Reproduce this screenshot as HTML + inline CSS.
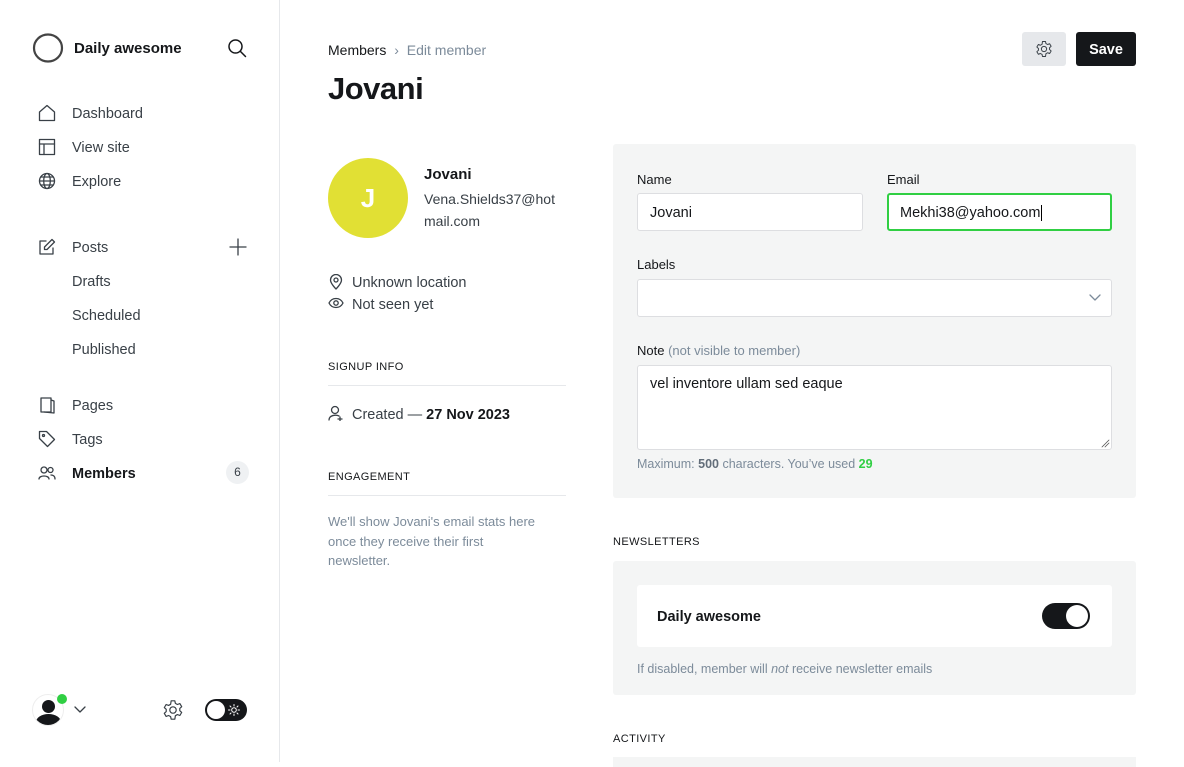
<!DOCTYPE html>
<html><head><meta charset="utf-8"><style>
*{box-sizing:border-box;margin:0;padding:0}
body{width:1184px;height:762px;overflow:hidden;background:#fff;font-family:"Liberation Sans",sans-serif;color:#15171a;position:relative}
.a{position:absolute}
.nav{font-size:14.5px;color:#394047;left:72px}
.ic{position:absolute;left:38px}
svg{fill:none;stroke:#394047;stroke-width:1.3;stroke-linecap:round;stroke-linejoin:round}
.lbl{font-size:13px;color:#15171a}
.inp{position:absolute;background:#fff;border:1px solid #dddee1;border-radius:3px;font-size:14.5px;padding-left:12px;color:#15171a}
.cap{font-size:11px;letter-spacing:.4px;color:#15171a}
.gray{color:#7c8b9a}
</style></head><body>
<div class="a" style="left:279px;top:0;width:1px;height:762px;background:#e6e8eb"></div>
<svg class="a" style="left:32px;top:33px" width="32" height="30" viewBox="0 0 32 30"><ellipse cx="16" cy="15" rx="14" ry="13.5" stroke="#444" stroke-width="2.2"/></svg>
<div class="a" style="left:74px;top:40px;font-size:15px;font-weight:bold">Daily awesome</div>
<svg class="a" style="left:227px;top:38px" width="20" height="20"><circle cx="8.5" cy="8.5" r="6.5" stroke="#15171a" stroke-width="1.5"/><path d="M13.5 13.5L18.5 18.5" stroke="#15171a" stroke-width="1.5"/></svg>

<svg class="ic" style="top:104px" width="18" height="18"><path d="M1.5 8L9 1.5L16.5 8V16.5H1.5Z"/></svg>
<div class="a nav" style="top:106px">Dashboard</div>
<svg class="ic" style="top:138px" width="18" height="18"><rect x="1.5" y="1.5" width="15" height="15"/><path d="M1.5 6H16.5M6 6V16.5"/></svg>
<div class="a nav" style="top:140px">View site</div>
<svg class="ic" style="top:172px" width="18" height="18"><circle cx="9" cy="9" r="7.5"/><ellipse cx="9" cy="9" rx="3.3" ry="7.5"/><path d="M1.5 9H16.5M3 5H15M3 13H15"/></svg>
<div class="a nav" style="top:174px">Explore</div>

<svg class="ic" style="top:238px" width="18" height="18"><path d="M8 3H2V16H15V10"/><path d="M14 1.5L16.5 4L9 11.5H6.5V9Z"/></svg>
<div class="a nav" style="top:240px">Posts</div>
<svg class="a" style="left:229px;top:238px" width="18" height="18"><path d="M9 1V17M1 9H17"/></svg>
<div class="a nav" style="top:274px">Drafts</div>
<div class="a nav" style="top:308px">Scheduled</div>
<div class="a nav" style="top:342px">Published</div>

<svg class="ic" style="top:396px" width="18" height="18"><path d="M3 2H13V16H3Z"/><path d="M13 4L16 5V17L6 16"/></svg>
<div class="a nav" style="top:398px">Pages</div>
<svg class="ic" style="top:430px" width="18" height="18"><path d="M1.5 1.5H8.5L16.5 9.5L9.5 16.5L1.5 8.5Z"/><circle cx="5.5" cy="5.5" r="1"/></svg>
<div class="a nav" style="top:432px">Tags</div>
<svg class="ic" style="top:465px" width="18" height="16"><circle cx="6" cy="5" r="3"/><path d="M1 14C1 10 11 10 11 14"/><circle cx="12.5" cy="5" r="2.5"/><path d="M13 10C15 10 17 11 17 14"/></svg>
<div class="a nav" style="top:466px;font-weight:bold;color:#15171a">Members</div>
<div class="a" style="left:226px;top:461px;width:23px;height:23px;border-radius:12px;background:#eff1f3;font-size:12px;text-align:center;line-height:23px;color:#394047">6</div>

<div class="a" style="left:32px;top:694px;width:32px;height:32px;border-radius:50%;border:1px solid #eee;overflow:hidden;background:#fff">
<div class="a" style="left:9px;top:5px;width:13px;height:13px;border-radius:50%;background:#15171a"></div>
<div class="a" style="left:3px;top:19px;width:25px;height:16px;border-radius:50% 50% 0 0;background:#15171a"></div></div>
<div class="a" style="left:57px;top:694px;width:10px;height:10px;border-radius:50%;background:#30cf43"></div>
<svg class="a" style="left:74px;top:706px" width="12" height="8"><path d="M1 1L6 6L11 1"/></svg>
<svg class="a" style="left:162px;top:699px" width="22" height="22" viewBox="0 0 24 24"><circle cx="12" cy="12" r="3.5"/><path d="M10 2h4l.6 2.8 2.2 1.2 2.7-1 2 3.4-2.1 1.9v2.4l2.1 1.9-2 3.4-2.7-1-2.2 1.2L14 22h-4l-.6-2.8-2.2-1.2-2.7 1-2-3.4 2.1-1.9V11.3L2.5 9.4l2-3.4 2.7 1 2.2-1.2Z"/></svg>
<div class="a" style="left:205px;top:699px;width:42px;height:22px;border-radius:11px;background:#15171a"></div>
<div class="a" style="left:207px;top:701px;width:18px;height:18px;border-radius:50%;background:#fff"></div>
<svg class="a" style="left:228px;top:704px" width="12" height="12"><circle cx="6" cy="6" r="2.3" stroke="#fff" stroke-width="1"/><path d="M6 0.5V2M6 10V11.5M0.5 6H2M10 6H11.5M2 2L3 3M9 9L10 10M2 10L3 9M9 3L10 2" stroke="#fff" stroke-width="1"/></svg>

<div class="a" style="left:328px;top:42px;font-size:14px;color:#15171a">Members <span style="color:#7c8b9a;margin:0 4px">›</span> <span style="color:#7c8b9a">Edit member</span></div>
<div class="a" style="left:328px;top:71px;font-size:31px;font-weight:bold;letter-spacing:-.5px">Jovani</div>
<div class="a" style="left:1022px;top:32px;width:44px;height:34px;border-radius:3px;background:#e6e8eb"></div>
<svg class="a" style="left:1035px;top:40px" width="18" height="18" viewBox="0 0 24 24"><circle cx="12" cy="12" r="3.5"/><path d="M10 2h4l.6 2.8 2.2 1.2 2.7-1 2 3.4-2.1 1.9v2.4l2.1 1.9-2 3.4-2.7-1-2.2 1.2L14 22h-4l-.6-2.8-2.2-1.2-2.7 1-2-3.4 2.1-1.9V11.3L2.5 9.4l2-3.4 2.7 1 2.2-1.2Z"/></svg>
<div class="a" style="left:1076px;top:32px;width:60px;height:34px;border-radius:3px;background:#15171a;color:#fff;font-weight:bold;font-size:14.5px;text-align:center;line-height:36px">Save</div>

<div class="a" style="left:328px;top:158px;width:80px;height:80px;border-radius:50%;background:#e1e034;color:#fff;font-size:26px;font-weight:bold;text-align:center;line-height:80px">J</div>
<div class="a" style="left:424px;top:166px;font-size:15px;font-weight:bold">Jovani</div>
<div class="a" style="left:424px;top:188px;font-size:14px;line-height:22px;color:#394047;width:142px;word-break:break-all">Vena.Shields37@hotmail.com</div>
<svg class="a" style="left:329px;top:274px" width="14" height="16"><path d="M7 15C7 15 1.5 9.5 1.5 6A5.5 5.5 0 0 1 12.5 6C12.5 9.5 7 15 7 15Z"/><circle cx="7" cy="6" r="2"/></svg>
<div class="a" style="left:352px;top:275px;font-size:14.5px;color:#394047">Unknown location</div>
<svg class="a" style="left:328px;top:297px" width="16" height="12"><path d="M1 6C4 0 12 0 15 6C12 12 4 12 1 6Z"/><circle cx="8" cy="6" r="2.2"/></svg>
<div class="a" style="left:352px;top:297px;font-size:14.5px;color:#394047">Not seen yet</div>
<div class="a cap" style="left:328px;top:361px">SIGNUP INFO</div>
<div class="a" style="left:328px;top:385px;width:238px;height:1px;background:#e6e8eb"></div>
<svg class="a" style="left:328px;top:405px" width="16" height="16"><circle cx="7" cy="5" r="3.5"/><path d="M1 15C1 10 8 9.5 11 11M12 12V16M10 14H14"/></svg>
<div class="a" style="left:352px;top:407px;font-size:14.5px;color:#394047">Created — <b style="color:#15171a">27 Nov 2023</b></div>
<div class="a cap" style="left:328px;top:471px">ENGAGEMENT</div>
<div class="a" style="left:328px;top:495px;width:238px;height:1px;background:#e6e8eb"></div>
<div class="a" style="left:328px;top:512px;font-size:13px;line-height:19.5px;color:#7c8b9a;width:240px;white-space:nowrap">We'll show Jovani's email stats here<br>once they receive their first<br>newsletter.</div>

<div class="a" style="left:613px;top:144px;width:523px;height:354px;background:#f4f5f5;border-radius:3px"></div>
<div class="a lbl" style="left:637px;top:172px">Name</div>
<div class="a lbl" style="left:887px;top:172px">Email</div>
<div class="inp" style="left:637px;top:193px;width:226px;height:38px;line-height:38px">Jovani</div>
<div class="inp" style="left:887px;top:193px;width:225px;height:38px;line-height:36px;border:2px solid #30cf43;padding-left:11px">Mekhi38@yahoo.com<span style="border-left:1px solid #000;margin-left:1px"></span></div>
<div class="a lbl" style="left:637px;top:257px">Labels</div>
<div class="inp" style="left:637px;top:279px;width:475px;height:38px"></div>
<svg class="a" style="left:1089px;top:294px" width="12" height="8"><path d="M1 1L6 6L11 1" stroke="#7c8b9a"/></svg>
<div class="a lbl" style="left:637px;top:343px">Note <span class="gray">(not visible to member)</span></div>
<div class="inp" style="left:637px;top:365px;width:475px;height:85px;padding-top:10px">vel inventore ullam sed eaque</div>
<svg class="a" style="left:1101px;top:439px" width="9" height="9"><path d="M1 8L8 1M4 8L8 4" stroke="#555" stroke-width="0.8"/></svg>
<div class="a" style="left:637px;top:457px;font-size:12.5px;color:#7c8b9a">Maximum: <b style="color:#626d79">500</b> characters. You’ve used <b style="color:#30cf43">29</b></div>

<div class="a cap" style="left:613px;top:536px">NEWSLETTERS</div>
<div class="a" style="left:613px;top:561px;width:523px;height:134px;background:#f4f5f5;border-radius:3px"></div>
<div class="a" style="left:637px;top:585px;width:475px;height:62px;background:#fff;border-radius:3px"></div>
<div class="a" style="left:657px;top:609px;font-size:14.5px;font-weight:bold">Daily awesome</div>
<div class="a" style="left:1042px;top:603px;width:48px;height:26px;border-radius:13px;background:#15171a"></div>
<div class="a" style="left:1066px;top:605px;width:22px;height:22px;border-radius:50%;background:#fff"></div>
<div class="a" style="left:637px;top:662px;font-size:12.5px;color:#7c8b9a">If disabled, member will <i>not</i> receive newsletter emails</div>
<div class="a cap" style="left:613px;top:733px">ACTIVITY</div>
<div class="a" style="left:613px;top:757px;width:523px;height:10px;background:#f4f5f5"></div>
</body></html>
